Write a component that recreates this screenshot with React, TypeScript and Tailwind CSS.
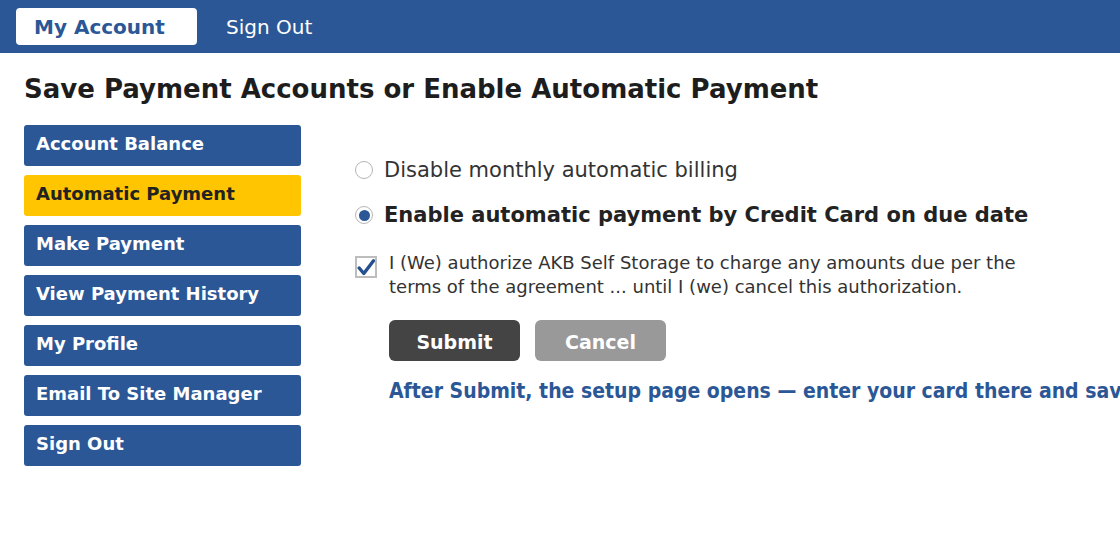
import React from "react";

const menu = [
  "Account Balance",
  "Automatic Payment",
  "Make Payment",
  "View Payment History",
  "My Profile",
  "Email To Site Manager",
  "Sign Out",
];

function Radio({ checked }: { checked?: boolean }) {
  return (
    <span className="flex h-[18px] w-[18px] shrink-0 items-center justify-center rounded-full border border-[#b5b5b5] bg-white">
      {checked && <span className="h-[11px] w-[11px] rounded-full bg-[#2b5797]" />}
    </span>
  );
}

export default function App() {
  return (
    <div className="h-[560px] w-[1120px] overflow-hidden bg-white font-['DejaVu_Sans',sans-serif] text-[#222]">
      <nav className="flex h-[53px] items-center gap-[29px] bg-[#2b5797] px-4">
        <a href="#" className="flex h-[37px] w-[181px] items-center rounded-[4px] bg-white pl-[18px] text-[20px] font-bold text-[#2b5797]">
          My Account
        </a>
        <a href="#" className="text-[20px] text-white">Sign Out</a>
      </nav>

      <h1 className="px-6 pt-[19px] text-[26px] font-bold leading-[34px] text-[#1d1d1d]">
        Save Payment Accounts or Enable Automatic Payment
      </h1>

      <div className="flex pt-[19px] pl-6">
        <ul className="flex w-[277px] shrink-0 flex-col gap-[9px]">
          {menu.map((m) => (
            <li
              key={m}
              className={
                m === "Automatic Payment"
                  ? "flex h-[41px] items-center rounded-[3px] bg-[#ffc500] pl-3 pb-[4px] text-[18px] font-bold text-[#222]"
                  : "flex h-[41px] items-center rounded-[3px] bg-[#2b5797] pl-3 pb-[4px] text-[18px] font-bold text-white"
              }
            >
              {m}
            </li>
          ))}
        </ul>

        <div className="flex flex-col pl-[54px] pt-[32px]">
          <label className="flex items-center gap-[11px] text-[21px] leading-[26px] text-[#333]">
            <Radio />
            Disable monthly automatic billing
          </label>
          <label className="mt-[19px] flex items-center gap-[11px] text-[21px] font-bold leading-[26px] text-[#222]">
            <Radio checked />
            Enable automatic payment by Credit Card on due date
          </label>

          <div className="mt-[23px] flex gap-[12px]">
            <span className="mt-[5px] flex h-[22px] w-[22px] shrink-0 items-center justify-center border-2 border-[#bdbdbd] bg-white">
              <svg width="18" height="17" viewBox="0 0 18 17">
                <path d="M2.2 9 L6.8 14.5 L16.5 1.8" fill="none" stroke="#24508f" strokeWidth="3.4" strokeLinecap="round" strokeLinejoin="round" />
              </svg>
            </span>
            <p className="w-[660px] text-[18px] leading-[24px] text-[#333]">
              I (We) authorize AKB Self Storage to charge any amounts due per the terms of the agreement ... until I (we) cancel this authorization.
            </p>
          </div>

          <div className="mt-[21px] flex gap-[15px] pl-[34px]">
            <button className="h-[41px] w-[131px] rounded-[6px] bg-[#444] pt-[3px] text-[19px] font-bold text-white">Submit</button>
            <button className="h-[41px] w-[131px] rounded-[6px] bg-[#999] pt-[3px] text-[19px] font-bold text-white">Cancel</button>
          </div>

          <p className="mt-[16px] whitespace-nowrap pl-[34px] font-['DejaVu_Sans_Condensed',sans-serif] text-[21px] font-bold leading-[28px] text-[#2b5797]">
            After Submit, the setup page opens — enter your card there and save it to finish.
          </p>
        </div>
      </div>
    </div>
  );
}
